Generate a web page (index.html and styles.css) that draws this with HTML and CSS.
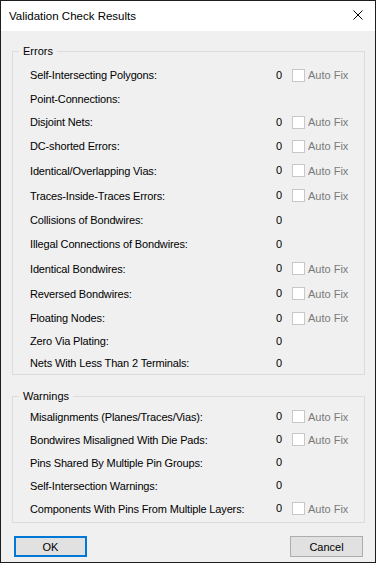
FILE: index.html
```html
<!DOCTYPE html>
<html lang="en">
<head>
    <meta charset="UTF-8">
    <meta name="viewport" content="width=device-width, initial-scale=1.0">
    <title>Validation Check Results</title>
    <link rel="stylesheet" href="styles.css">
</head>
<body>
    <div class="dialog">
        <div class="title-bar">
            <span class="title">Validation Check Results</span>
            <svg class="close" width="10" height="10" viewBox="0 0 10 10">
                <path d="M0.5 0.5 L9.5 9.5 M9.5 0.5 L0.5 9.5" stroke="#000" stroke-width="1" fill="none"/>
            </svg>
        </div>

        <div class="content">
            <fieldset class="group">
                <legend>Errors</legend>
                <div class="rows errors">
                    <div class="row"><span class="label">Self-Intersecting Polygons:</span><span class="count">0</span><input type="checkbox" disabled><span class="fix">Auto Fix</span></div>
                    <div class="row"><span class="label">Point-Connections:</span></div>
                    <div class="row"><span class="label">Disjoint Nets:</span><span class="count">0</span><input type="checkbox" disabled><span class="fix">Auto Fix</span></div>
                    <div class="row"><span class="label">DC-shorted Errors:</span><span class="count">0</span><input type="checkbox" disabled><span class="fix">Auto Fix</span></div>
                    <div class="row"><span class="label">Identical/Overlapping Vias:</span><span class="count">0</span><input type="checkbox" disabled><span class="fix">Auto Fix</span></div>
                    <div class="row"><span class="label">Traces-Inside-Traces Errors:</span><span class="count">0</span><input type="checkbox" disabled><span class="fix">Auto Fix</span></div>
                    <div class="row"><span class="label">Collisions of Bondwires:</span><span class="count">0</span></div>
                    <div class="row"><span class="label">Illegal Connections of Bondwires:</span><span class="count">0</span></div>
                    <div class="row"><span class="label">Identical Bondwires:</span><span class="count">0</span><input type="checkbox" disabled><span class="fix">Auto Fix</span></div>
                    <div class="row"><span class="label">Reversed Bondwires:</span><span class="count">0</span><input type="checkbox" disabled><span class="fix">Auto Fix</span></div>
                    <div class="row"><span class="label">Floating Nodes:</span><span class="count">0</span><input type="checkbox" disabled><span class="fix">Auto Fix</span></div>
                    <div class="row"><span class="label">Zero Via Plating:</span><span class="count">0</span></div>
                    <div class="row"><span class="label">Nets With Less Than 2 Terminals:</span><span class="count">0</span></div>
                </div>
            </fieldset>

            <fieldset class="group warnings-group">
                <legend>Warnings</legend>
                <div class="rows warnings">
                    <div class="row"><span class="label">Misalignments (Planes/Traces/Vias):</span><span class="count">0</span><input type="checkbox" disabled><span class="fix">Auto Fix</span></div>
                    <div class="row"><span class="label">Bondwires Misaligned With Die Pads:</span><span class="count">0</span><input type="checkbox" disabled><span class="fix">Auto Fix</span></div>
                    <div class="row"><span class="label">Pins Shared By Multiple Pin Groups:</span><span class="count">0</span></div>
                    <div class="row"><span class="label">Self-Intersection Warnings:</span><span class="count">0</span></div>
                    <div class="row"><span class="label">Components With Pins From Multiple Layers:</span><span class="count">0</span><input type="checkbox" disabled><span class="fix">Auto Fix</span></div>
                </div>
            </fieldset>

            <div class="buttons">
                <button class="btn btn-default">OK</button>
                <button class="btn">Cancel</button>
            </div>
        </div>
    </div>
</body>
</html>
```

FILE: styles.css
```css
* {
    box-sizing: border-box;
}

body {
    margin: 0;
    background-color: #f0f0f0;
    font-family: "Liberation Sans", Arial, sans-serif;
    font-size: 11px;
    color: #000;
}

.dialog {
    width: 376px;
    height: 563px;
    border: 1px solid #1e1e1e;
    background-color: #f0f0f0;
    display: flex;
    flex-direction: column;
}

.title-bar {
    height: 30px;
    background-color: #fff;
    display: flex;
    align-items: center;
    justify-content: space-between;
    padding: 0 12px 1px 8px;
}

.title {
    font-size: 11.5px;
}

.close {
    display: block;
    margin-top: -2px;
}

.content {
    flex: 1;
    padding: 13px 10px 5px 11px;
    display: flex;
    flex-direction: column;
}

.group {
    margin: 0;
    padding: 4px 0 0 0;
    border: 1px solid #dcdcdc;
    min-width: 0;
}

.group legend {
    margin-left: 6px;
    padding: 0 4px;
    line-height: 15px;
}

.warnings-group {
    margin-top: 14px;
    padding: 1px 0 2px 0;
}

.rows {
    display: grid;
}

.errors {
    grid-template-rows: 24px 23px 24px 24px 25px 25px 24px 24px 25px 25px 24px 22px 22px;
}

.warnings {
    grid-template-rows: repeat(5, 23px);
}

.row {
    display: grid;
    grid-template-columns: 246px 16px 13px auto;
    align-items: center;
    padding-left: 17px;
}

.label {
    letter-spacing: -0.15px;
    white-space: nowrap;
}

.count {
    line-height: 13px;
}

.row input {
    appearance: none;
    -webkit-appearance: none;
    margin: 0;
    width: 13px;
    height: 13px;
    border: 1px solid #c8c8c8;
    background-color: #fff;
}

.fix {
    margin-left: 3px;
    color: #7a7a7a;
}

.buttons {
    margin-top: 13px;
    display: flex;
    justify-content: space-between;
    padding: 0 2px;
}

.btn {
    width: 73px;
    height: 21px;
    padding: 0;
    font-family: inherit;
    font-size: 11px;
    color: #000;
    background-color: #e1e1e1;
    border: 1px solid #adadad;
    border-radius: 0;
}

.btn-default {
    border: 2px solid #0078d7;
}
```
